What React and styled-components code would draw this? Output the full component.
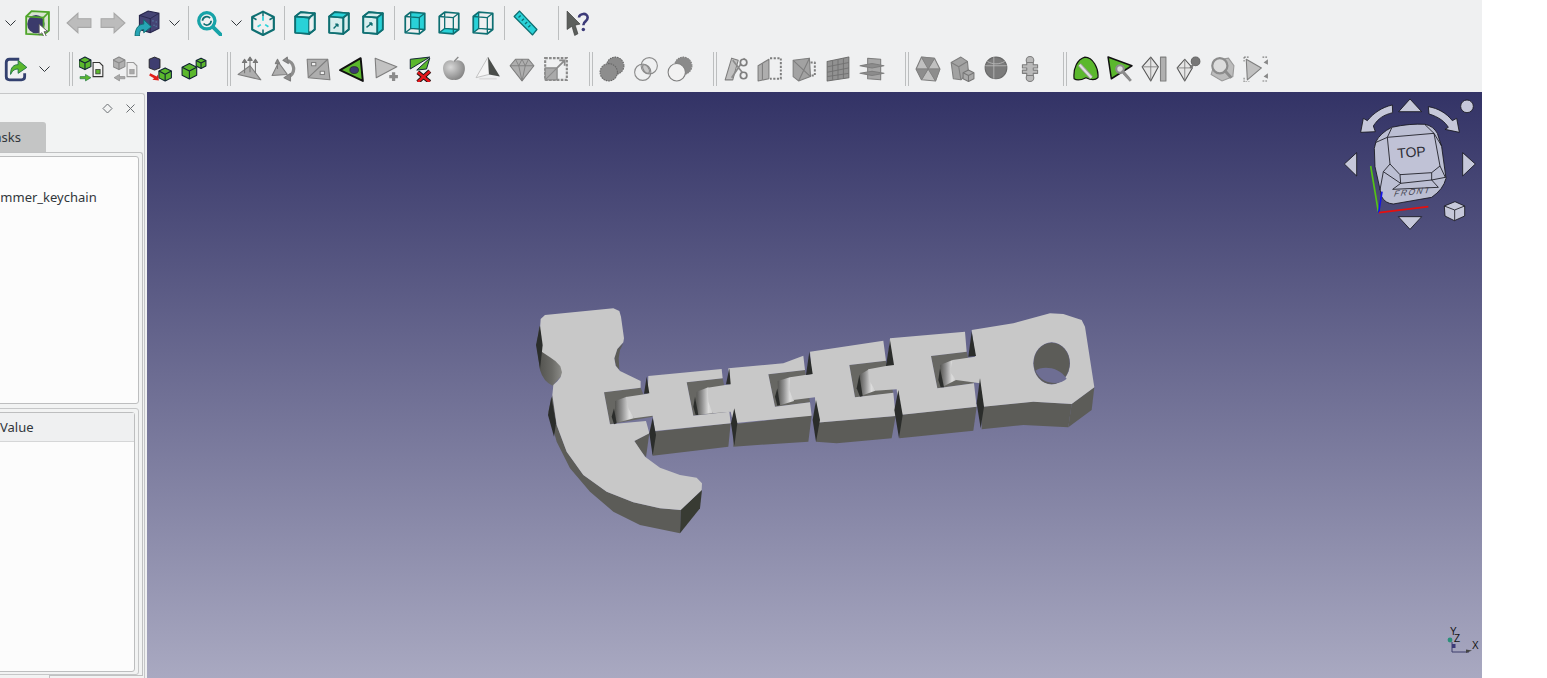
import React from "react";
import styled, { createGlobalStyle } from "styled-components";

const Global = createGlobalStyle`
  html, body { margin: 0; background: #fff; }
  body { width: 1547px; height: 678px; overflow: hidden; font-family: "Noto Sans", sans-serif; }
`;

const Window = styled.div`
  width: 1482px;
  height: 678px;
  display: flex;
  flex-direction: column;
  background: #eff0f1;
  overflow: hidden;
`;

const Toolbar = styled.div`
  height: 46px;
  flex: none;
  display: flex;
  align-items: center;
  margin-left: ${(p) => p.$shift || 0}px;
`;

const Slot = styled.div`
  width: 34px;
  height: 34px;
  flex: none;
  display: flex;
  align-items: center;
  justify-content: center;
  svg { width: 26px; height: 26px; display: block; filter: blur(0.3px); }
`;

const Chevron = styled.div`
  width: ${(p) => p.$w || 20}px;
  flex: none;
  display: flex;
  justify-content: center;
  svg { width: 11px; height: 6px; display: block; }
`;

const Separator = styled.div`
  width: 8px;
  height: 34px;
  flex: none;
  margin-left: ${(p) => p.$gap || 0}px;
  display: flex;
  justify-content: center;
  &::before {
    content: "";
    width: 1px;
    background: #bcbebf;
  }
`;

const Handle = styled.div`
  width: 8px;
  height: 34px;
  flex: none;
  margin-left: ${(p) => p.$gap || 14}px;
  display: flex;
  justify-content: center;
  gap: 2px;
  &::before, &::after {
    content: "";
    width: 1px;
    background: #bcbebf;
  }
`;

const Body = styled.div`
  flex: 1;
  min-height: 0;
  display: flex;
`;

const Dock = styled.div`
  width: 147px;
  flex: none;
  overflow: hidden;
  display: flex;
  flex-direction: column;
`;

const DockFrame = styled.div`
  flex: 1;
  margin: 1px 2px 0 -10px;
  border: 1px solid #c6c7c8;
  border-bottom: none;
  border-radius: 3px 3px 0 0;
  background: #f2f3f3;
  display: flex;
  flex-direction: column;
  min-height: 0;
`;

const DockTitle = styled.div`
  height: 28px;
  flex: none;
  display: flex;
  align-items: center;
  justify-content: flex-end;
  gap: 12px;
  padding-right: 8px;
  svg { width: 11px; height: 11px; display: block; }
`;

const TabBar = styled.div`
  height: 30px;
  flex: none;
  display: flex;
`;

const Tab = styled.div`
  width: 55px;
  box-sizing: border-box;
  background: #c4c5c5;
  border-radius: 3px 3px 0 0;
  padding-right: 25px;
  display: flex;
  align-items: center;
  justify-content: flex-end;
  font-size: 13px;
  color: #31363b;
`;

const Pane = styled.div`
  height: 523px;
  flex: none;
  margin-right: 1px;
  box-sizing: border-box;
  border: 1px solid #c0c1c2;
  border-bottom: none;
  border-radius: 3px 3px 0 0;
  padding: 3px 3px 0 0;
  display: flex;
  flex-direction: column;
  gap: 4px;
`;

const Tree = styled.div`
  height: 248px;
  flex: none;
  box-sizing: border-box;
  background: #fcfcfc;
  border: 1px solid #bdbebf;
  border-radius: 3px;
  padding-top: 31px;
  font-size: 13px;
  line-height: 18px;
  color: #31363b;
  span { display: block; margin-left: -8px; white-space: nowrap; }
`;

const PropFrame = styled.div`
  height: 267px;
  flex: none;
  box-sizing: border-box;
  border: 1px solid #c6c7c8;
  border-radius: 3px;
  padding: 3px 3px 2px 0;
  display: flex;
`;

const PropTable = styled.div`
  flex: 1;
  background: #fcfcfc;
  border: 1px solid #bdbebf;
  border-radius: 3px;
  display: flex;
  flex-direction: column;
`;

const PropHead = styled.div`
  height: 28px;
  flex: none;
  background: #eff0f1;
  border-bottom: 1px solid #d5d6d7;
  padding-left: 6px;
  display: flex;
  align-items: center;
  font-size: 13px;
  color: #31363b;
`;

const DockFoot = styled.div`
  flex: 1;
  margin: 0 1px 0 58px;
  border-top: 1px solid #c0c1c2;
  border-left: 1px solid #c0c1c2;
`;

const Viewport = styled.div`
  flex: 1;
  min-width: 0;
  background: linear-gradient(180deg, #333366 0%, #a9a9c1 100%);
`;

const Scene = styled.svg`
  display: block;
  width: 100%;
  height: 100%;
`;

const Teal = "#0e6f72";
const Cyan = "#29d2d8";

function Box({ front, top, right, back, children }) {
  return (
    <g stroke={Teal} strokeWidth="1.6" strokeLinejoin="round" fill="#eff0f1">
      <path d="M3 6 8 2 21 3 21 18 16 22 3 21Z" fill={back ? Cyan : "#d8eeee"} />
      <path d="M3 6 16 7 16 22 3 21Z" fill={front ? Cyan : "none"} />
      <path d="M3 6 8 2 21 3 16 7Z" fill={top ? Cyan : "none"} />
      <path d="M16 7 21 3 21 18 16 22Z" fill={right ? Cyan : "none"} />
      {children}
    </g>
  );
}

function Wire({ fill, children }) {
  return (
    <g stroke={Teal} strokeWidth="1.6" strokeLinejoin="round" fill="none">
      {fill}
      <path d="M3 6 8 2 21 3 21 18 16 22 3 21Z" />
      <path d="M3 6 16 7 16 22M16 7 21 3M8 2 8 17 3 21M8 17 21 18" strokeWidth="1.2" />
      {children}
    </g>
  );
}

function GreenCube({ x = 0, y = 0, s = 1, color = "#5bb82d", line = "#123" }) {
  return (
    <g transform={`translate(${x} ${y}) scale(${s})`} stroke={line} strokeWidth={1 / s} strokeLinejoin="round">
      <path d="M0 2.5 5 0 10 2.5 10 8 5 10.5 0 8Z" fill={color} />
      <path d="M0 2.5 5 5 10 2.5M5 5V10.5" fill="none" />
    </g>
  );
}

const Doc = ({ x, y, line = "#333", fill = "#f4f4f4", dot = "#5bb82d" }) => (
  <g transform={`translate(${x} ${y})`}>
    <path d="M0 0H6L9 3V13H0Z" fill={fill} stroke={line} strokeWidth="1" />
    <rect x="2.5" y="6.5" width="4" height="4" fill={dot} stroke={line} strokeWidth=".7" />
  </g>
);

const Gr = ({ children, ...rest }) => (
  <g stroke="#7e7e7e" strokeWidth="1" strokeLinejoin="round" fill="#aeaeae" {...rest}>
    {children}
  </g>
);

const Lens = ({ cx = 13, cy = 12, r = 6, stroke = "#8c8c8c" }) => (
  <g fill="none">
    <circle cx={cx} cy={cy} r={r} stroke={stroke} strokeWidth="2" fill="#dcdcdc" />
    <path d={`M${cx + r * 0.7} ${cy + r * 0.7} l5 5.5`} stroke={stroke} strokeWidth="2.6" strokeLinecap="round" />
  </g>
);

const icons = {
  selection: (
    <g>
      <path d="M2 6 7 1 23 2 23 19 18 23 2 22Z" fill="#d8e4d0" stroke="#4fa52a" strokeWidth="1.7" />
      <ellipse cx="11" cy="13" rx="8" ry="8.5" fill="#3b3a6b" />
      <path d="M2 6 18 7V23M18 7 23 2" fill="none" stroke="#4fa52a" strokeWidth="1.5" />
      <path d="M14 13V23L16.5 21 18.5 25 20.5 24 18.5 20 22 20Z" fill="#fff" stroke="#555" strokeWidth=".8" />
    </g>
  ),
  back: <path d="M1 12 11 3V8H23V16H11V21Z" fill="#bcbcbc" stroke="#a8a8a8" />,
  forward: <path d="M23 12 13 3V8H1V16H13V21Z" fill="#bcbcbc" stroke="#a8a8a8" />,
  view: (
    <g>
      <path d="M5 5 13 1 23 3 23 17 15 21 5 18Z" fill="#454474" stroke="#26254a" />
      <path d="M5 5 15 8 23 3M15 8V21" fill="none" stroke="#26254a" strokeWidth=".8" />
      <path d="M17 10h1M20 11h1M18 14h1M20 15h1" stroke="#5a8fb0" strokeWidth="1" />
      <path d="M1 24C1 16 5 13 9 13V9L16 15.5 9 21V18C6 18 5 20 5 24Z" fill="#27a5b5" stroke="#0e6f72" strokeWidth=".9" />
    </g>
  ),
  zoom: (
    <g fill="none" stroke="#17a3a8">
      <circle cx="10" cy="10" r="7.5" strokeWidth="3" />
      <path d="M6 10a4 4 0 0 1 7-2.5M14 10a4 4 0 0 1-7 2.5" strokeWidth="1.6" stroke={Teal} />
      <path d="M16 16 23 23" strokeWidth="3.6" strokeLinecap="round" />
    </g>
  ),
  iso: (
    <g fill="none" stroke={Teal} strokeWidth="2" strokeLinejoin="round">
      <path d="M12 1.5 22 6.5V18L12 23 2 18V6.5Z" />
      <path d="M12 1.5V6M2 6.5 6 9M22 6.5 18 9M12 23V18" strokeWidth="1.4" />
      <path d="M7 15.5 10 13.5M14 13.5 17 15.5M12 6V10" stroke={Cyan} strokeWidth="1.6" />
    </g>
  ),
  front: <Box front><path d="M16 9 19 7V17L16 20Z" fill="#eff0f1" stroke="none" /></Box>,
  top: <Box top><path d="M7 17 11 13M11 13V15.5M11 13H8.5" fill="none" strokeWidth="1.3" /></Box>,
  right: <Box right><path d="M6 16 11 12M11 12V14.5M11 12H8.5" fill="none" strokeWidth="1.3" /></Box>,
  rear: <Wire fill={<path d="M8 2 21 3 21 18 8 17Z" fill={Cyan} stroke="none" />} />,
  bottom: <Wire fill={<path d="M3 21 8 17 21 18 16 22Z" fill={Cyan} stroke="none" />} />,
  left: <Wire fill={<path d="M3 6 8 2 8 17 3 21Z" fill={Cyan} stroke="none" />} />,
  ruler: (
    <g stroke={Teal} strokeWidth="1.2" strokeLinejoin="round">
      <path d="M2 6 7 1 23 18 19 23Z" fill={Cyan} />
      <path d="M6 7 8 5M9 10 11 8M12 13 14 11M15 16 17 14" fill="none" />
    </g>
  ),
  help: (
    <g>
      <path d="M1 1 13 13 8.5 14 11 22 8 23.5 5.5 15 1 18Z" fill="#5c5f5c" stroke="#3b3d3b" strokeWidth=".6" />
      <path d="M12 7C12 3 20 2 20 7 20 11 16 10 16 14" fill="none" stroke="#3c3a78" strokeWidth="2.4" />
      <circle cx="16" cy="18" r="1.6" fill="#3c3a78" />
    </g>
  ),
  share: (
    <g>
      <path d="M15 3H6Q3 3 3 6V19Q3 22 6 22H17Q20 22 20 19V16" fill="none" stroke="#33406f" strokeWidth="2.6" />
      <path d="M7 17C7 10 10 8 14 8V4L22 10.5 14 16V12C11 12 9 13 7 17Z" fill="#5bb82d" stroke="#274" strokeWidth=".9" />
    </g>
  ),
  toFile: (
    <g>
      <GreenCube x={0} y={1} s={1.1} />
      <Doc x={13} y={6} />
      <path d="M1 19H6V17L11 20 6 23V21H1Z" fill="#5bb82d" stroke="#274" strokeWidth=".6" />
    </g>
  ),
  fromFile: (
    <g>
      <GreenCube x={0} y={1} s={1.1} color="#b0b0b0" line="#888" />
      <Doc x={13} y={6} line="#999" fill="#eee" dot="#aaa" />
      <path d="M11 19H6V17L1 20 6 23V21H11Z" fill="#aaa" stroke="#888" strokeWidth=".6" />
    </g>
  ),
  exchange: (
    <g>
      <path d="M2 3 7 1 12 3 12 11 7 13 2 11Z" fill="#3f3e70" stroke="#222" strokeWidth=".8" />
      <GreenCube x={11} y={11} s={1.15} />
      <path d="M3 16 9 19 10 17 11 22.5 5 22 6.5 20.5 2 18Z" fill="#e0201c" />
    </g>
  ),
  twoCubes: (
    <g>
      <GreenCube x={1} y={7} s={1.35} />
      <GreenCube x={14} y={2} s={.9} />
    </g>
  ),
  moveGrid: (
    <Gr>
      <path d="M1 17 12 9 22 22Z" />
      <path d="M7 16V5M7 3 5 6H9ZM12 15V3M12 1 10 4H14ZM17 16V5M17 3 15 6H19Z" fill="#777" stroke="#777" />
    </Gr>
  ),
  turn: (
    <Gr>
      <path d="M1 18 7 6 15 17Z" />
      <path d="M6 3 4 7H8ZM6 7V12" fill="#888" />
      <path d="M14 4C22 5 24 16 15 20" fill="none" stroke="#8d8d8d" strokeWidth="3" />
      <path d="M12 20 18 16V23Z" fill="#8d8d8d" />
      <path d="M15 1 11 4 16 7Z" fill="#8d8d8d" />
    </Gr>
  ),
  plane: (
    <Gr>
      <path d="M2 3 21 3 23 22 3 20Z" />
      <path d="M21 3 3 20" fill="none" />
      <rect x="6" y="6" width="4" height="3" fill="#efefef" />
      <rect x="14" y="14" width="4" height="3" fill="#efefef" />
    </Gr>
  ),
  greenTri: (
    <g>
      <path d="M1 13 20 2 22 23Z" fill="#5bb82d" stroke="#111" strokeWidth="1.8" strokeLinejoin="round" />
      <ellipse cx="14" cy="13" rx="4" ry="3.2" fill="#3c3a70" stroke="#222" strokeWidth=".6" />
    </g>
  ),
  addTri: (
    <Gr>
      <path d="M2 2 22 10 3 20Z" fill="#c2c2c2" />
      <path d="M15 19H23M19 15V23" stroke="#8b8b8b" strokeWidth="3" />
    </Gr>
  ),
  delTri: (
    <g>
      <path d="M3 12 3 3 21 1Z M9 13 21 2 18 12Z" fill="#5bb82d" stroke="#123" strokeWidth=".9" />
      <path d="M10 15 21 24M21 14 10 24" stroke="#111" strokeWidth="4" />
      <path d="M10 15 21 24M21 14 10 24" stroke="#e3161b" strokeWidth="2.4" />
    </g>
  ),
  apple: (
    <g>
      <defs>
        <radialGradient id="apple" cx=".35" cy=".35" r=".75">
          <stop offset="0" stopColor="#d8d8d8" />
          <stop offset="1" stopColor="#7d7d7d" />
        </radialGradient>
      </defs>
      <path d="M12 5C17 2 23 6 22 13 21 20 16 23 12 22 8 23 3 20 2 13 1 6 7 2 12 5Z" fill="url(#apple)" />
      <path d="M12 5 16 1" stroke="#888" strokeWidth="1.2" />
    </g>
  ),
  pyramid: (
    <g strokeLinejoin="round">
      <path d="M12 1 1 20 13 17Z" fill="#f5f5f5" stroke="#bbb" strokeWidth=".8" />
      <path d="M12 1 13 17 23 19Z" fill="#4a4d4a" />
      <path d="M4 21H20" stroke="#ddd" strokeWidth="1.5" />
    </g>
  ),
  diamond: (
    <Gr>
      <path d="M1 9 6 3H18L23 9 12 23Z" fill="#aeaeae" />
      <path d="M1 9H23M6 3 9 9 12 23 15 9 18 3M12 3 9 9M12 3 15 9" fill="none" strokeWidth=".8" />
    </Gr>
  ),
  scale: (
    <g fill="none" stroke="#8a8a8a">
      <rect x="2" y="2" width="20" height="20" strokeDasharray="2.4 1.2" strokeWidth="2" />
      <rect x="2" y="11" width="11" height="11" fill="#aaa" strokeWidth="1.2" />
      <path d="M2 22 13 11" strokeWidth="1" />
      <path d="M13 11 20 4M15 4H20V9" strokeWidth="1.6" />
    </g>
  ),
  mesh: (
    <Gr stroke="#666">
      <circle cx="15" cy="9" r="8" fill="#8a8a8a" strokeDasharray="1.5 .8" />
      <circle cx="9" cy="15" r="8" fill="#8d8d8d" strokeDasharray="1.5 .8" />
    </Gr>
  ),
  rings: (
    <g fill="none" stroke="#8b8b8b">
      <circle cx="15" cy="9" r="7.5" />
      <circle cx="9" cy="15" r="7.5" />
      <path d="M9 8.5C12 7 16 11 15 15.5 12 17 8 13 9 8.5Z" fill="#c8c8c8" />
    </g>
  ),
  subtract: (
    <g stroke="#808080">
      <circle cx="15" cy="9" r="8" fill="#8a8a8a" strokeDasharray="1.5 .8" />
      <circle cx="9" cy="15" r="8" fill="#f2f2f2" />
    </g>
  ),
  scissors: (
    <Gr>
      <path d="M2 22 8 2 14 4 9 22Z" fill="#c0c0c0" />
      <path d="M20 2 8 20M9 4 20 18" fill="none" stroke="#8b8b8b" strokeWidth="1.6" />
      <circle cx="19" cy="6" r="3" fill="#eff0f1" strokeWidth="1.6" />
      <circle cx="19" cy="18" r="3" fill="#eff0f1" strokeWidth="1.6" />
    </Gr>
  ),
  slab: (
    <Gr>
      <path d="M1 9 11 3V21L1 23Z" />
      <path d="M5 7V22" fill="none" />
      <path d="M12 2H22V21H12" fill="none" strokeWidth="1.8" strokeDasharray="2 1.4" />
    </Gr>
  ),
  extrude: (
    <Gr>
      <path d="M2 4 17 2 18 19 7 23 2 19Z" fill="#a2a2a2" />
      <path d="M2 4 18 19M17 2 7 23" fill="none" />
      <path d="M18 6H22V18H18" fill="none" strokeWidth="1.8" strokeDasharray="2 1.4" />
    </Gr>
  ),
  grid: (
    <Gr stroke="#6f6f6f">
      <path d="M2 5 22 1V20L2 23Z" fill="#919191" />
      <path d="M7 4V22M12 3V21.5M17 2V21M2 10 22 6M2 15 22 11M2 19 22 16" fill="none" strokeWidth=".8" />
    </Gr>
  ),
  layers: (
    <Gr>
      <path d="M8 2 20 3V22L8 21Z" fill="#a6a6a6" />
      <path d="M1 9 12 7 23 9 12 11Z" fill="#8c8c8c" />
      <path d="M1 16 12 14 23 16 12 18Z" fill="#8c8c8c" />
    </Gr>
  ),
  pie: (
    <Gr>
      <path d="M6 1 18 2 23 12 19 23 6 22 1 12Z" fill="#c0c0c0" />
      <path d="M6 1 19 23M18 2 6 22M1 12H23" fill="none" />
      <path d="M12 12 6 1 18 2ZM12 12 1 12 6 22ZM12 12 23 12 19 23Z" fill="#8d8d8d" strokeWidth=".5" />
    </Gr>
  ),
  block: (
    <Gr>
      <path d="M2 6 11 1 17 5 18 15 11 22 4 21Z" fill="#a2a2a2" />
      <path d="M2 6 9 10 17 5M9 10 11 22" fill="none" />
      <GreenCube x={13} y={13} s={1} color="#a9a9a9" line="#777" />
    </Gr>
  ),
  sphere: (
    <Gr stroke="#6a6a6a">
      <circle cx="12" cy="11" r="10" fill="#7b7b7b" />
      <path d="M10 1V21M2 9H22M4 5C9 8 15 8 20 5" fill="none" stroke="#b8b8b8" strokeWidth=".8" />
    </Gr>
  ),
  puzzle: (
    <Gr fill="#b9b9b9">
      <circle cx="12" cy="4" r="3.5" />
      <circle cx="12" cy="20" r="3.5" />
      <path d="M9 6H15V8H19V11H15V13H19V16H15V18H9V16H5V13H9V11H5V8H9Z" />
    </Gr>
  ),
  greenWrench: (
    <g>
      <path d="M1 21C0 11 4 3 11 1 18 1 24 11 23 20 20 23 16 22 12 20 8 22 4 23 1 21Z" fill="#5bb82d" stroke="#111" strokeWidth="1.1" />
      <path d="M6 8 17 20" stroke="#9c9c9c" strokeWidth="3.6" />
      <path d="M6 8 17 20" stroke="#e0e0e0" strokeWidth="2" />
    </g>
  ),
  greenLens: (
    <g>
      <path d="M1 1 23 9 4 21Z" fill="#5bb82d" stroke="#111" strokeWidth="1.4" strokeLinejoin="round" />
      <Lens cx={12} cy={12} r={3.5} />
      <path d="M15 15 22 23" stroke="#8c8c8c" strokeWidth="2.6" />
    </g>
  ),
  diamondBar: (
    <Gr>
      <path d="M9 1 16 10 9 23 1 10Z" fill="#e6e6e6" stroke="#555" />
      <path d="M1 10H16M9 1V23" fill="none" strokeWidth=".8" />
      <rect x="18" y="1" width="5" height="22" fill="#b0b0b0" />
    </Gr>
  ),
  diamondPin: (
    <Gr>
      <path d="M9 3 16 11 9 23 2 11Z" fill="#e6e6e6" stroke="#555" />
      <path d="M2 11H16M9 3V23" fill="none" strokeWidth=".8" />
      <circle cx="19" cy="5" r="4" fill="#777" stroke="#666" />
      <path d="M14 11 18 7" stroke="#777" strokeWidth="2" />
    </Gr>
  ),
  search: (
    <g>
      <path d="M6 4 18 2 23 9 22 19 12 23 2 17Z" fill="#bcbcbc" stroke="#999" />
      <Lens cx={10} cy={9} r={7} />
    </g>
  ),
  section: (
    <Gr>
      <path d="M3 3 17 11 4 22Z" fill="#c0c0c0" />
      <path d="M1 1H6M1 1V5M1 20V24H6M18 1H23M18 23H23" fill="none" strokeDasharray="1.6 1" />
      <path d="M23 3 19 6 23 8ZM23 16 19 19 23 21Z" fill="#888" stroke="none" />
    </Gr>
  ),
};

const ChevronDown = () => (
  <svg viewBox="0 0 11 6">
    <path d="M.5.5 5.5 5.5 10.5.5" fill="none" stroke="#31363b" strokeWidth="1" />
  </svg>
);

const Icon = ({ name }) => (
  <Slot>
    <svg viewBox="0 0 24 24">{icons[name]}</svg>
  </Slot>
);

const Wall = "#5c5c58";
const Slotted = "#676763";
const Face = "#c8c8c8";
const Spike = "#2b2d2b";

// hammer head and first two links, points read off a 3x crop at (520,295)
const headFace =
  "62,72 75,60 280,40 298,48 303,65 312,130 310,142 292,162 283,190 287,212 300,228 362,258 362,278 252,292 270,388 378,378 388,415 343,438 375,485 420,518 480,540 530,548 546,565 545,585 482,645 420,640 340,622 260,590 190,540 140,470 110,390 97,300 100,270 112,259 122,246 126,232 121,214 106,198 90,187 65,170 58,130";

const leftLinks = {
  walls: [
    "97,300 85,350 110,440 150,520 210,590 280,650 360,690 480,715 482,645 420,640 340,622 260,590 190,540 140,470 110,390",
    "310,145 292,162 283,190 288,212 298,224 296,190 300,165",
    "343,438 388,415 378,487 360,465",
    "398,410 632,385 625,455 398,482",
    "640,388 875,360 865,440 640,455",
  ],
  slots: [
    "252,292 362,278 398,365 270,388",
    "500,262 608,250 628,350 520,362",
    "745,238 855,225 870,322 765,335",
  ],
  ends: ["285,318 320,305 342,370 285,385", "530,290 565,277 578,355 528,360", "773,258 810,247 822,318 775,332"],
  faces: [
    headFace,
    "385,243 605,222 608,250 500,262 520,362 628,350 632,385 405,408 398,362 342,370 325,340 318,306 383,296",
    "625,220 790,205 850,182 855,225 745,238 765,335 870,322 875,362 640,385 632,350 578,355 565,320 563,278 630,268",
  ],
  spikes: [
    "60,92 48,150 60,222 68,150",
    "94,305 84,360 102,425 108,385",
    "380,245 372,296 388,295",
    "398,368 388,415 398,482 408,420",
    "628,220 618,268 632,268",
    "643,340 633,385 643,452 652,385",
    "282,340 275,365 282,388 290,385",
    "525,305 520,335 527,360 535,360",
    "772,280 765,305 772,332 780,330",
  ],
};

// remaining links and the handle, read off a 3x crop at (800,300)
const rightLinks = {
  walls: [
    "48,368 287,348 275,415 110,430 48,425",
    "298,345 530,320 520,392 298,415",
    "545,320 700,305 815,312 805,382 670,375 545,388",
    "815,312 883,262 875,330 805,382",
  ],
  slots: ["148,195 258,182 280,280 165,292", "393,168 500,155 522,250 412,265"],
  ends: ["178,225 207,208 226,272 182,288", "420,195 458,180 468,240 425,262"],
  faces: [
    "30,155 250,122 258,182 148,195 165,292 280,278 287,348 48,368 45,292 -20,300 -32,270 -30,232 35,222",
    "270,115 495,95 500,155 393,168 412,265 522,250 530,320 298,345 290,268 226,272 207,240 205,208 262,197",
  ],
  spikes: [
    "28,155 18,225 38,222",
    "270,120 258,198 282,195",
    "515,95 505,170 528,168",
    "48,300 38,360 48,425 60,360",
    "295,270 283,330 297,415 308,345",
    "540,235 530,310 542,385 552,320",
    "178,225 170,265 180,290 188,288",
    "420,205 415,240 422,262 432,262",
  ],
};

const Polys = ({ list, fill }) => list.map((p) => <polygon key={p} points={p} fill={fill} />);

const Hammer = () => (
  <g>
    <defs>
      <linearGradient id="tabEnd" x1="0" x2="1" y1="0" y2="0">
        <stop offset="0" stopColor="#555552" />
        <stop offset=".35" stopColor="#8e8e8e" />
        <stop offset=".75" stopColor="#dcdcdc" />
        <stop offset="1" stopColor="#cdcdcd" />
      </linearGradient>
      <linearGradient id="notch" x1="0" x2="1" y1="0" y2="0">
        <stop offset="0" stopColor="#4f4f4b" />
        <stop offset=".6" stopColor="#6a6a66" />
        <stop offset="1" stopColor="#8c8c88" />
      </linearGradient>
    </defs>
    <g transform="translate(520 295) scale(.33333)">
      <Polys list={leftLinks.walls} fill={Wall} />
      <path d="M58 92 50 150 60 225Q70 260 98 272L126 240 126 205 90 180Z" fill="url(#notch)" />
      <polygon points="480,715 540,640 546,585 482,645" fill="#383b33" />
      <Polys list={leftLinks.slots} fill={Slotted} />
      <Polys list={leftLinks.ends} fill="url(#tabEnd)" />
      <Polys list={leftLinks.faces} fill={Face} />
      <Polys list={leftLinks.spikes} fill={Spike} />
    </g>
    <g transform="translate(800 300) scale(.33333)">
      <Polys list={rightLinks.walls} fill={Wall} />
      <Polys list={rightLinks.slots} fill={Slotted} />
      <Polys list={rightLinks.ends} fill="url(#tabEnd)" />
      <Polys list={rightLinks.faces} fill={Face} />
      <path
        d="M515 90 640 70 750 40 790 42 845 60 855 80 883 262 815 312 700 305 550 320 540 250 468 240 450 215 458 180 525 170Z M700 190A54 62 0 0 0 810 190A54 62 0 0 0 700 190Z"
        fill={Face}
        fillRule="evenodd"
      />
      <ellipse cx="755" cy="190" rx="54" ry="62" fill={Wall} />
      <path d="M706 212C725 198 775 198 800 236 780 256 725 256 706 212Z" fill="#6e6e93" />
      <Polys list={rightLinks.spikes} fill={Spike} />
    </g>
  </g>
);

const NavCube = () => (
  <g transform="translate(1330 90) scale(.33333)" stroke="#14141c" strokeWidth="2.5" strokeLinejoin="round">
    <g fill="#c6c8da">
      <path d="M187 45 188 68C160 75 145 85 130 108L136 125 92 127 100 85 112 92C130 70 155 52 187 45Z" />
      <path d="M295 50 297 72C325 80 345 95 355 112L345 118 388 127 380 85 367 92C350 70 325 55 295 50Z" />
      <path d="M240 27 275 65H206Z" />
      <circle cx="411" cy="49" r="19" />
      <path d="M80 188V258L43 222Z" />
      <path d="M398 188V258L436 222Z" />
      <path d="M205 380H275L240 418Z" />
      <path d="M343 348 375 335 404 348 404 378 373 392 345 378Z" />
      <path d="M343 348 374 360 404 348M374 360V392" fill="none" />
    </g>
    <path
      d="M138 155Q150 130 185 112Q240 100 285 103Q310 108 322 130L335 170 348 265Q340 298 305 322L190 342Q165 340 155 320L135 230 133 175Z"
      fill="#bcbfd3"
    />
    <path d="M172 142 312 130 330 228 305 248 210 254 180 222Z" fill="#c0c2d6" />
    <path
      d="M185 114 172 142 138 157M285 104 312 130 335 168M180 222 160 245 150 300M210 254 212 280 305 270 305 248M305 270 346 262M212 280 188 298M160 245 212 280M305 270 325 292M188 298 325 292M330 228 346 262"
      fill="none"
    />
    <text x="0" y="0" transform="translate(203 205) rotate(-5)" fontFamily="'Liberation Sans', sans-serif" fontSize="42" fill="#2d2d35" stroke="none">
      TOP
    </text>
    <text x="0" y="0" transform="translate(190 320) rotate(-6) skewX(-25)" fontFamily="'Liberation Sans', sans-serif" fontSize="25" letterSpacing="5" fill="#40404a" stroke="none">
      FRONT
    </text>
    <path d="M122 228 145 365" stroke="#55c414" strokeWidth="5" fill="none" />
    <path d="M156 305 146 368" stroke="#1414e6" strokeWidth="5" fill="none" />
    <path d="M147 368 295 350" stroke="#e60f0f" strokeWidth="5" fill="none" />
  </g>
);

const CornerAxes = () => (
  <g>
    <path d="M1452 642V652H1469" fill="none" stroke="#3d3d6a" strokeWidth="1" />
    <path d="M1466 649.5 1472 650.5 1466 653Z" fill="#444" />
    <circle cx="1450" cy="640" r="2.4" fill="#2a8f7a" />
    <rect x="1452" y="644" width="3.5" height="4" fill="#3b3a78" />
    <g fontFamily="'Liberation Sans', sans-serif" fontSize="10" fill="#141414">
      <text x="1450" y="635">Y</text>
      <text x="1454" y="642">Z</text>
      <text x="1472" y="649">X</text>
    </g>
  </g>
);

export default function App() {
  return (
    <>
      <Global />
      <Window>
        <Toolbar>
          <Chevron><ChevronDown /></Chevron>
          <Icon name="selection" />
          <Separator />
          <Icon name="back" />
          <Icon name="forward" />
          <Icon name="view" />
          <Chevron><ChevronDown /></Chevron>
          <Separator />
          <Icon name="zoom" />
          <Chevron><ChevronDown /></Chevron>
          <Icon name="iso" />
          <Separator />
          <Icon name="front" />
          <Icon name="top" />
          <Icon name="right" />
          <Separator />
          <Icon name="rear" />
          <Icon name="bottom" />
          <Icon name="left" />
          <Separator />
          <Icon name="ruler" />
          <Separator $gap={12} />
          <Icon name="help" />
        </Toolbar>
        <Toolbar $shift={-1}>
          <Icon name="share" />
          <Chevron $w={22}><ChevronDown /></Chevron>
          <Handle $gap={12} />
          {["toFile", "fromFile", "exchange", "twoCubes"].map((n) => <Icon key={n} name={n} />)}
          <Handle />
          {["moveGrid", "turn", "plane", "greenTri", "addTri", "delTri", "apple", "pyramid", "diamond", "scale"].map((n) => <Icon key={n} name={n} />)}
          <Handle />
          {["mesh", "rings", "subtract"].map((n) => <Icon key={n} name={n} />)}
          <Handle />
          {["scissors", "slab", "extrude", "grid", "layers"].map((n) => <Icon key={n} name={n} />)}
          <Handle />
          {["pie", "block", "sphere", "puzzle"].map((n) => <Icon key={n} name={n} />)}
          <Handle />
          {["greenWrench", "greenLens", "diamondBar", "diamondPin", "search", "section"].map((n) => <Icon key={n} name={n} />)}
        </Toolbar>
        <Body>
          <Dock>
            <DockFrame>
              <DockTitle>
                <svg viewBox="0 0 11 11">
                  <path d="M5.5 1 10 5.5 5.5 10 1 5.5Z" fill="none" stroke="#6b6f73" />
                </svg>
                <svg viewBox="0 0 11 11">
                  <path d="M1.5 1.5 9.5 9.5M9.5 1.5 1.5 9.5" fill="none" stroke="#6b6f73" />
                </svg>
              </DockTitle>
              <TabBar>
                <Tab>Tasks</Tab>
              </TabBar>
              <Pane>
                <Tree>
                  <span>hammer_keychain</span>
                </Tree>
                <PropFrame>
                  <PropTable>
                    <PropHead>Value</PropHead>
                  </PropTable>
                </PropFrame>
              </Pane>
              <DockFoot />
            </DockFrame>
          </Dock>
          <Viewport>
            <Scene viewBox="147 92 1335 586">
              <Hammer />
              <NavCube />
              <CornerAxes />
            </Scene>
          </Viewport>
        </Body>
      </Window>
    </>
  );
}
